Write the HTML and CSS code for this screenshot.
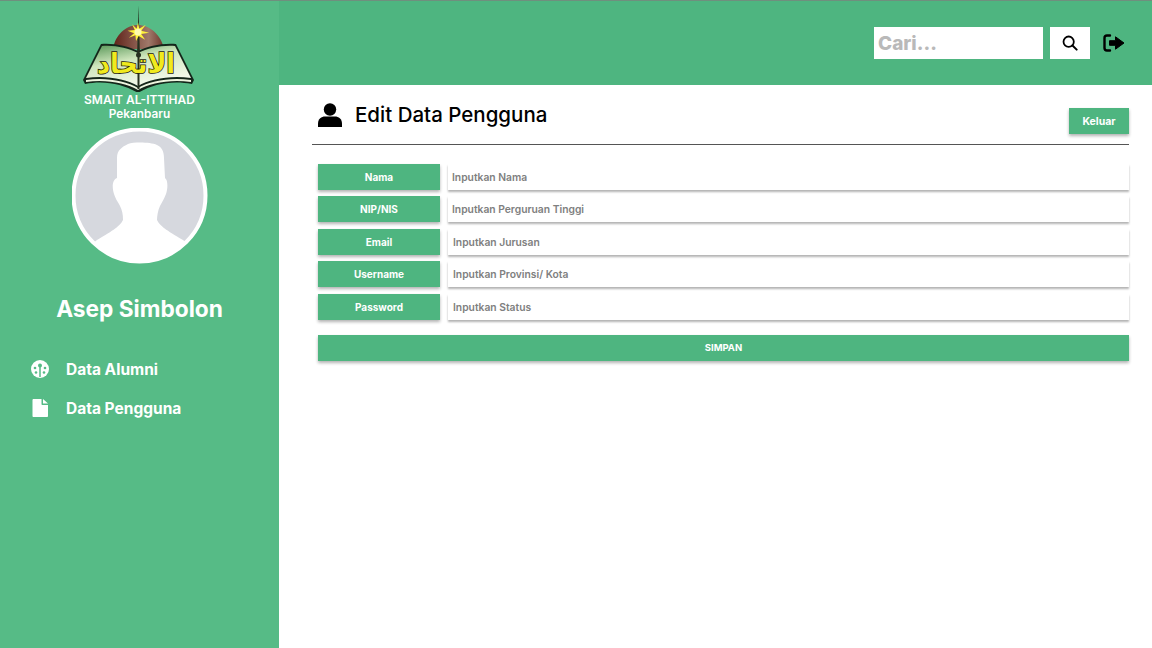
FILE: index.html
```html
<!DOCTYPE html>
<html lang="en">
<head>
	<meta charset="UTF-8">
	<title>Edit Data Pengguna</title>
	<link rel="stylesheet" href="styles.css">
</head>
<body>
<div class="page">
	<aside class="sidebar">
		<svg class="logo" viewBox="0 0 120 87" width="120" height="87">
			<defs>
				<linearGradient id="page-fill" x1="0.1" y1="0" x2="0.6" y2="1">
					<stop offset="0" stop-color="#5d9a5c"/>
					<stop offset="0.4" stop-color="#cfe6bd"/>
					<stop offset="1" stop-color="#f6faee"/>
				</linearGradient>
				<linearGradient id="dome-fill" x1="0" y1="0" x2="1" y2="0">
					<stop offset="0" stop-color="#5f2118"/>
					<stop offset="0.7" stop-color="#a0796a"/>
					<stop offset="1" stop-color="#6a3328"/>
				</linearGradient>
			</defs>
			<path d="M33 44 C35 30 46 20 58 20 C70 20 81 30 84 44 Z" fill="url(#dome-fill)"/>
			<path d="M58.500 0 L59.800 46 L57.200 46 Z" fill="#26301f"/>
			<path transform="translate(58 27) scale(.65) translate(-58 -27)" d="M58 12 L60 22 L70 16 L63 25 L75 28 L63 30 L69 39 L59 33 L55 41 L54 32 L44 36 L52 29 L42 25 L53 24 L49 15 L56 22 Z" fill="#fff23a"/>
			<circle cx="58" cy="27" r="3.500" fill="#fffbb0"/>
			<path d="M3 75 L21 39 C34 38 48 41 58 46 C68 41 82 38 96 39 L114 75 L112 79 C92 75 72 79 58 88 C44 79 24 75 5 79 Z" fill="#14261a"/>
			<path d="M6 73 L22 41 C35 40 48 43 58 48 C68 43 82 40 95 41 L111 73 C90 70 70 74 58 81 C46 74 26 70 6 73 Z" fill="url(#page-fill)"/>
			<path d="M6 75 C26 72 46 76 58 83 C70 76 90 72 111 75 L111 77 C90 74 70 78 58 85 C46 78 26 74 6 77 Z" fill="#eef5df"/>
			<rect x="57.500" y="44" width="2" height="40" fill="#26301f"/>
			<circle cx="58.500" cy="50" r="2.500" fill="#26301f"/>
			<text class="logo-arabic" x="56" y="68" text-anchor="middle" direction="rtl" textLength="78" lengthAdjust="spacingAndGlyphs">الاتحاد</text>
		</svg>
		<div class="school">SMAIT AL-ITTIHAD</div>
		<div class="city">Pekanbaru</div>
		<svg class="avatar" viewBox="0 0 136 136" width="136" height="136">
			<defs>
				<clipPath id="avatar-clip"><circle cx="67.500" cy="67.500" r="66"/></clipPath>
			</defs>
			<circle cx="67.500" cy="67.500" r="66" fill="#d6d8de"/>
			<path clip-path="url(#avatar-clip)" d="M45 30 C45 22 50 19 56 16 C62 14 78 14 85 17 C90 19 92 24 92 30 L93 50 C96 52 96 60 94 66 C92 71 90 74 88 78 C86 82 85 88 85 92 C88 98 94 102 111 112 L125 124 L125 140 L10 140 L10 124 L25 112 C42 102 48 98 51 92 C51 86 50 82 48 78 C46 74 44 72 42 66 C40 60 40 52 45 50 Z" fill="#fff"/>
			<circle cx="67.500" cy="67.500" r="66" fill="none" stroke="#fff" stroke-width="4"/>
		</svg>
		<div class="user-name">Asep Simbolon</div>
		<nav class="menu">
			<a class="menu-item">
				<svg viewBox="0 0 20 20" width="20" height="20">
					<circle cx="10" cy="10" r="9" fill="#fff"/>
					<path d="M10 8 V18" stroke="#56bb86" stroke-width="1.500" fill="none"/>
					<circle cx="10" cy="6.500" r="2" fill="#56bb86"/>
					<circle cx="5" cy="9" r="1.300" fill="#56bb86"/>
					<circle cx="15" cy="9" r="1.300" fill="#56bb86"/>
					<circle cx="6" cy="13.500" r="1.300" fill="#56bb86"/>
					<circle cx="14" cy="13.500" r="1.300" fill="#56bb86"/>
				</svg>
				<span>Data Alumni</span>
			</a>
			<a class="menu-item">
				<svg viewBox="0 0 20 20" width="20" height="20">
					<path d="M3.500 1 C3 1 2.500 1.500 2.500 2 V18 C2.500 18.600 3 19 3.500 19 H17 C17.500 19 18 18.600 18 18 V7 H12.500 C11.900 7 11.500 6.600 11.500 6 V1 Z M13 1 V5.500 H18 Z" fill="#fff"/>
				</svg>
				<span>Data Pengguna</span>
			</a>
		</nav>
	</aside>

	<div class="main">
		<header class="topbar">
			<input class="search" type="text" placeholder="Cari...">
			<button class="search-btn">
				<svg viewBox="0 0 18 18" width="16" height="16">
					<circle cx="7.500" cy="7.500" r="5.800" fill="none" stroke="#000" stroke-width="2"/>
					<path d="M11.800 11.800 L16.500 16.500" stroke="#000" stroke-width="2.200" stroke-linecap="round"/>
				</svg>
			</button>
			<svg class="logout" viewBox="0 0 22 18" width="22" height="18">
				<path d="M7 1.500 H4 C2.500 1.500 1.500 2.500 1.500 4 V14 C1.500 15.500 2.500 16.500 4 16.500 H7" fill="none" stroke="#000" stroke-width="2.400" stroke-linecap="round"/>
				<path d="M6.500 6.700 H12.500 V2.800 L21 9 L12.500 15.200 V11.300 H6.500 Z" fill="#000" stroke="#000" stroke-linejoin="round"/>
			</svg>
		</header>

		<section class="content">
			<div class="title-row">
				<h1 class="title">
					<svg viewBox="0 0 24 24" width="24" height="24">
						<circle cx="12" cy="6.500" r="6.200" fill="#000"/>
						<path d="M0 24 V20.500 C0 16 3.500 13.500 7 13.500 H17 C20.500 13.500 24 16 24 20.500 V24 Z" fill="#000"/>
					</svg>
					Edit Data Pengguna
				</h1>
				<button class="btn btn-exit">Keluar</button>
			</div>

			<form class="form">
				<div class="row"><label>Nama</label><input type="text" placeholder="Inputkan Nama"></div>
				<div class="row"><label>NIP/NIS</label><input type="text" placeholder="Inputkan Perguruan Tinggi"></div>
				<div class="row"><label>Email</label><input class="shift" type="text" placeholder="Inputkan Jurusan"></div>
				<div class="row"><label>Username</label><input class="shift" type="text" placeholder="Inputkan Provinsi/ Kota"></div>
				<div class="row"><label>Password</label><input class="shift" type="text" placeholder="Inputkan Status"></div>
				<button class="btn btn-save" type="button">SIMPAN</button>
			</form>
		</section>
	</div>
</div>
</body>
</html>
```
FILE: styles.css
```css
body{
	margin:0;
	font-family:"Inter","Noto Sans",sans-serif;
	background:#fff;
}
.page{
	display:flex;
	height:648px;
	overflow:hidden;
	border-top:1px solid #6f8f7e;
	box-sizing:border-box;
}
.sidebar{
	width:279px;
	flex:none;
	background:#56bb86;
	color:#fff;
	display:flex;
	flex-direction:column;
	align-items:center;
}
.logo{
	display:block;
	margin-top:4px;
}
.logo-arabic{
	font-family:"DejaVu Sans",sans-serif;
	font-size:27px;
	font-weight:bold;
	fill:#f0ea1e;
	stroke:#1f200a;
	stroke-width:1.600;
	paint-order:stroke;
}
.school{
	font-size:12px;
	font-weight:600;
	line-height:15px;
}
.city{
	font-size:11.800px;
	font-weight:600;
	line-height:14px;
}
.avatar{
	display:block;
	margin-top:7px;
}
.user-name{
	font-size:22.700px;
	font-weight:700;
	line-height:30px;
	margin-top:30px;
}
.menu{
	align-self:stretch;
	margin-top:35px;
	padding-left:30px;
	display:flex;
	flex-direction:column;
	gap:19px;
}
.menu-item{
	display:flex;
	align-items:center;
	gap:16px;
	height:20px;
	font-size:15.500px;
	font-weight:700;
}
.main{
	flex:1;
	min-width:0;
	display:flex;
	flex-direction:column;
}
.topbar{
	height:84px;
	flex:none;
	background:#4eb580;
	display:flex;
	align-items:center;
	justify-content:flex-end;
	padding-right:27px;
	box-sizing:border-box;
}
.search{
	width:169px;
	height:32px;
	border:none;
	outline:none;
	padding:0 4px;
	box-sizing:border-box;
	font-family:inherit;
	font-size:19px;
	font-weight:800;
}
.search::placeholder{
	color:#b9b9b9;
	opacity:1;
}
.search-btn{
	width:40px;
	height:32px;
	margin-left:7px;
	border:none;
	background:#fff;
	padding:0;
	display:flex;
	align-items:center;
	justify-content:center;
}
.logout{
	margin-left:13px;
}
.content{
	padding:18px 23px 0 33px;
}
.title-row{
	display:flex;
	justify-content:space-between;
	align-items:flex-start;
	height:41px;
	padding-left:6px;
	border-bottom:1px solid #555;
}
.title{
	margin:0;
	display:flex;
	align-items:center;
	gap:13px;
	font-size:20.500px;
	font-weight:500;
	line-height:24px;
	color:#000;
}
.btn{
	border:none;
	background:#4eb580;
	color:#fff;
	font-family:inherit;
	font-weight:700;
	font-size:9.500px;
	box-shadow:0 2px 3px rgba(0,0,0,.3);
	padding:0;
}
.btn-exit{
	width:60px;
	height:26px;
	margin-top:5px;
	font-size:10.500px;
}
.form{
	display:flex;
	flex-direction:column;
	padding:18.600px 0 0 6px;
	gap:6.500px;
}
.row{
	display:flex;
	gap:8px;
	height:26px;
}
.row label{
	width:122px;
	flex:none;
	background:#4eb580;
	color:#fff;
	font-size:10px;
	font-weight:700;
	line-height:26px;
	text-align:center;
	box-shadow:0 2px 3px rgba(0,0,0,.3);
}
.row input{
	flex:1;
	min-width:0;
	border:none;
	outline:none;
	padding:0 4px;
	background:#fff;
	font-family:inherit;
	font-size:10.300px;
	font-weight:600;
	box-shadow:0 2px 2px rgba(0,0,0,.3);
}
.row input.shift{
	padding-left:5px;
}
.row input::placeholder{
	color:#808080;
	opacity:1;
}
.btn-save{
	height:26px;
	margin-top:8.500px;
}
```
